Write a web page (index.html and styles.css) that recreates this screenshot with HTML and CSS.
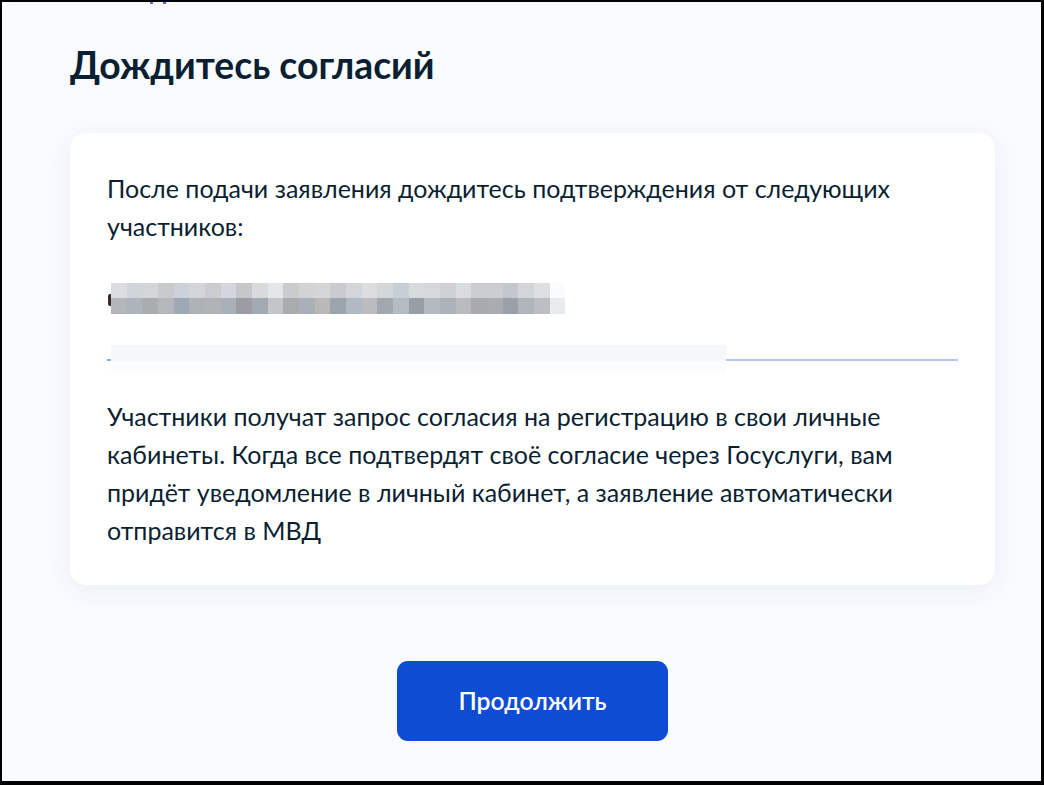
FILE: index.html
```html
<!DOCTYPE html>
<html lang="ru">
<head>
<meta charset="utf-8">
<title>Дождитесь согласий</title>
<link rel="stylesheet" href="styles.css">
</head>
<body>
<div class="frame">
  <div class="page">
    <div class="back"><span class="back-dot"></span><span class="back-dot"></span></div>
    <h1 class="title">Дождитесь согласий</h1>
    <section class="card">
      <p class="text">После подачи заявления дождитесь подтверждения от следующих участников:</p>
      <div class="participant">
        <span class="glyph"></span>
        <div class="blur">
          <div class="blur-row blur-top"></div>
          <div class="blur-row blur-bottom"></div>
        </div>
      </div>
      <div class="field">
        <span class="field-dot"></span>
        <div class="field-fill"></div>
        <div class="field-line"></div>
      </div>
      <p class="text">Участники получат запрос согласия на регистрацию в свои личные кабинеты. Когда все подтвердят своё согласие через Госуслуги, вам придёт уведомление в личный кабинет, а заявление автоматически отправится в МВД</p>
    </section>
    <div class="actions">
      <button class="btn" type="button">Продолжить</button>
    </div>
  </div>
</div>
</body>
</html>
```
FILE: styles.css
```css
* { box-sizing: border-box; }
html, body { margin: 0; padding: 0; }
body {
  font-family: Lato, "Noto Sans", sans-serif;
  color: #0b1f33;
  background: #000;
}
.frame {
  width: 1044px;
  height: 785px;
  border: 2px solid #000;
  border-right-width: 3px;
  border-bottom-width: 4px;
  background: #f9fbfe;
  overflow: hidden;
}
.page {
  padding-left: 68px;
  width: 995px;
}
.back {
  display: flex;
  gap: 10px;
  height: 2px;
  padding-left: 80px;
}
.back-dot {
  width: 3px;
  height: 2px;
  background: #3d6fe0;
}
.title {
  margin: 37px 0 0;
  font-size: 37.3px;
  line-height: 48px;
  font-weight: 700;
  letter-spacing: 0;
}
.card {
  margin-top: 44px;
  width: 925px;
  background: #fff;
  border-radius: 16px;
  box-shadow: 0 6px 28px rgba(0, 55, 150, 0.07);
  padding: 36px 37px 35px 37px;
}
.text {
  margin: 0;
  font-size: 25px;
  line-height: 38.3px;
}
.participant {
  display: flex;
  align-items: center;
  margin-top: 37px;
  margin-left: 1px;
  height: 31px;
}
.glyph {
  width: 3px;
  height: 12px;
  margin-top: 4px;
  border-radius: 2px 0 0 2px;
  background: #3a2a24;
}
.blur {
  display: flex;
  flex-direction: column;
  width: 454px;
}
.blur-row { height: 15.5px; }
.blur-top {
  background: linear-gradient(to right,
    #dcdde0 0 15.66px, #d0d5dc 15.66px 31.3px, #d3d6d9 31.3px 47px, #c9cacc 47px 62.6px,
    #cdd2d8 62.6px 78.3px, #d3d5d8 78.3px 94px, #cbcccd 94px 109.6px, #d3d7dd 109.6px 125.3px,
    #c5c7c9 125.3px 141px, #d8dadc 141px 156.6px, #e4e7ea 156.6px 172.3px, #cacbcd 172.3px 188px,
    #d2d3d5 188px 203.6px, #d4d5d6 203.6px 219.3px, #c9cbce 219.3px 235px, #d2d5da 235px 250.6px,
    #dcdddf 250.6px 266.3px, #d5d6d7 266.3px 282px, #c7cfd6 282px 297.6px, #d8dbde 297.6px 313.3px,
    #d6d8db 313.3px 329px, #cfd1d4 329px 344.6px, #d9dcdf 344.6px 360.3px, #cbcdd0 360.3px 376px,
    #cbcdd0 376px 391.6px, #c4c7cc 391.6px 407.3px, #d3d5d8 407.3px 423px, #dedfe0 423px 438.6px,
    #fafbfc 438.6px 454px);
}
.blur-bottom {
  background: linear-gradient(to right,
    #b3b6ba 0 15.66px, #adb4bb 15.66px 31.3px, #a9adb0 31.3px 47px, #b5b7b9 47px 62.6px,
    #9ea9b5 62.6px 78.3px, #adb2b6 78.3px 94px, #b1b3b6 94px 109.6px, #a8b1b9 109.6px 125.3px,
    #9a9ea4 125.3px 141px, #a2abb3 141px 156.6px, #c2c6cb 156.6px 172.3px, #a9abae 172.3px 188px,
    #a9b0b7 188px 203.6px, #b9b9ba 203.6px 219.3px, #9aa5ae 219.3px 235px, #b1b9c2 235px 250.6px,
    #babcbf 250.6px 266.3px, #a3a8ae 266.3px 282px, #b4bcc3 282px 297.6px, #999ea6 297.6px 313.3px,
    #b3bac1 313.3px 329px, #adb3b9 329px 344.6px, #b8bcbf 344.6px 360.3px, #a7aaae 360.3px 376px,
    #a9adb2 376px 391.6px, #9a9fa8 391.6px 407.3px, #b0b5bb 407.3px 423px, #bcbfc2 423px 438.6px,
    #e8ebee 438.6px 454px);
}
.field {
  display: flex;
  align-items: flex-start;
  margin-top: 31px;
  height: 28px;
  margin-bottom: 24px;
}
.field-dot {
  width: 4px;
  height: 2px;
  margin-top: 14px;
  background: #8ea6ee;
}
.field-fill {
  width: 615px;
  height: 28px;
  background: linear-gradient(to bottom, #f5f7fb 0 16px, #fbfcfd 16px 28px);
}
.field-line {
  width: 232px;
  height: 2px;
  margin-top: 14px;
  background: #b3c6f2;
}
.actions {
  display: flex;
  justify-content: center;
  width: 925px;
  margin-top: 76px;
}
.btn {
  width: 271px;
  height: 80px;
  border: 0;
  border-radius: 11px;
  background: #0d4cd3;
  color: #fff;
  font-family: Lato, "Noto Sans", sans-serif;
  font-size: 24.7px;
  font-weight: 600;
  cursor: pointer;
}
```
